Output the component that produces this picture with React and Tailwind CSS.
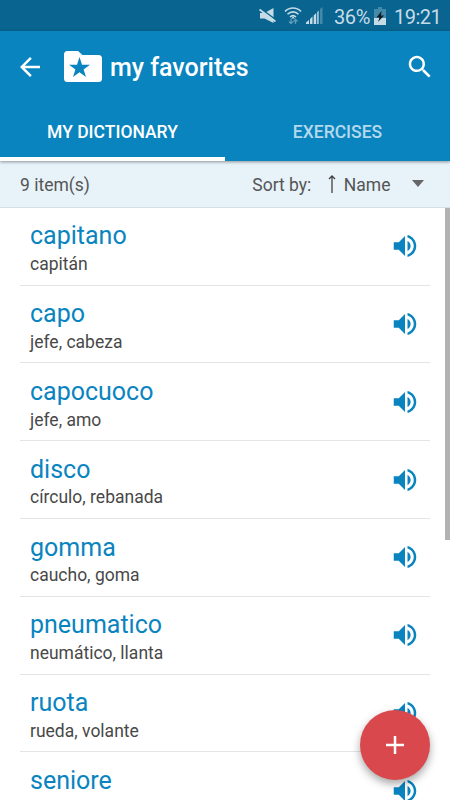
import React from 'react';

const WORDS = [
  { word: 'capitano', translation: 'capitán' },
  { word: 'capo', translation: 'jefe, cabeza' },
  { word: 'capocuoco', translation: 'jefe, amo' },
  { word: 'disco', translation: 'círculo, rebanada' },
  { word: 'gomma', translation: 'caucho, goma' },
  { word: 'pneumatico', translation: 'neumático, llanta' },
  { word: 'ruota', translation: 'rueda, volante' },
  { word: 'seniore', translation: '' },
];

const SpeakerIcon = () => (
  <svg viewBox="0 0 24 24" className="h-[30px] w-[30px] shrink-0 fill-[#0984bf]">
    <path d="M3 9v6h4l5 5V4L7 9H3zm13.5 3c0-1.77-1.02-3.29-2.5-4.03v8.05c1.48-.73 2.5-2.25 2.5-4.02zM14 3.23v2.06c2.89.86 5 3.54 5 6.71s-2.11 5.85-5 6.71v2.06c4.01-.91 7-4.49 7-8.77s-2.99-7.86-7-8.77z" />
  </svg>
);

const StatusBar = () => (
  <div className="flex h-[31px] shrink-0 items-center bg-[#09648f] text-[#c5dce8]">
    {/* muted */}
    <svg viewBox="0 0 17 18" className="ml-[259px] h-[18px] w-[17px] shrink-0">
      <path d="M1 6h4.500L14.500 1v15L5.500 11.500H1z" fill="#c5dce8" />
      <path d="M1 1.200 17 13" stroke="#09648f" strokeWidth="1.500" />
      <path d="M.5 2.500 16.500 14.500" stroke="#c5dce8" strokeWidth="1.800" />
    </svg>
    {/* wifi */}
    <svg viewBox="0 0 18 19" className="ml-[8px] h-[19px] w-[18px] shrink-0" fill="none">
      <path d="M1 5.500c4.500-4.700 11.500-4.700 16 0M3.500 8.300c3.200-3.200 7.800-3.200 11 0M6 11c1.800-1.700 4.200-1.700 6 0" stroke="#c5dce8" strokeWidth="1.600" />
      <path d="M9 10.500 11 12.500H7z" fill="#c5dce8" />
      <path d="M7 13v4.500M5 15.500l2 2 2-2M11.500 18v-4.500M9.500 15.500l2-2 2 2" stroke="#5f9dbb" strokeWidth="1.300" />
    </svg>
    {/* signal */}
    <svg viewBox="0 0 17 17" className="ml-[4px] h-[17px] w-[17px] shrink-0">
      <path d="M0 17v-1.500L3 13v4zM4 17v-5l2.500-2.500V17zM7.700 17V8.500L10.200 6v11z" fill="#c5dce8" />
      <path d="M11.300 17V5l1.700-1.700V17zM14 17V2l2.500-2v17z" fill="#4389aa" />
      <path d="M11.300 17V5l1.200-1.200V17z" fill="#c5dce8" />
    </svg>
    <span className="ml-[11px] w-[38px] pt-[3px] text-[20px] leading-[31px] tracking-[-0.4px]">36%</span>
    <svg viewBox="0 0 12 18" className="ml-[2px] h-[18px] w-[12px] shrink-0">
      <path d="M4 0h4v2h4v16H0V2h4z" fill="#4389aa" />
      <path d="M0 11h12v7H0z" fill="#c5dce8" />
      <path d="M7.500 4 2.500 10.500h3L4 15l6-6.500H7z" fill="#0b1d27" />
    </svg>
    <span className="ml-[8px] pt-[3px] text-[20px] leading-[31px] tracking-[-0.5px]">19:21</span>
  </div>
);

const AppBar = () => (
  <header className="relative z-10 h-[130px] shrink-0 bg-[#0984bf] text-white shadow-[0_1px_3px_rgba(0,0,0,0.4)]">
    <div className="flex h-[71px] items-center pl-[15px] pr-[15px]">
      <svg viewBox="0 0 24 24" className="h-[30px] w-[30px] fill-white">
        <path d="M20 11H7.830l5.590-5.590L12 4l-8 8 8 8 1.410-1.410L7.830 13H20v-2z" />
      </svg>
      <svg viewBox="0 0 38 31" className="ml-[18.500px] h-[31px] w-[38px]">
        <path d="M3.500 0H14l4.500 4H34.500Q38 4 38 7.500v20Q38 31 34.500 31h-31Q0 31 0 27.500v-24Q0 0 3.500 0z" fill="#fff" />
        <path d="m15.500 6 2.500 7.700h8l-6.400 4.700 2.400 7.600-6.500-4.700L9 26l2.400-7.600L5 13.700h8z" fill="#0984bf" />
      </svg>
      <h1 className="ml-[8.500px] pt-[3px] text-[25px] font-medium leading-[30px]">my favorites</h1>
      <svg viewBox="0 0 24 24" className="ml-auto h-[30px] w-[30px] fill-white">
        <path d="M15.500 14h-.79l-.28-.27C15.410 12.590 16 11.110 16 9.500 16 5.910 13.090 3 9.500 3S3 5.910 3 9.500 5.910 16 9.500 16c1.610 0 3.090-.59 4.230-1.570l.27.28v.79l5 4.990L20.490 19l-4.990-5zm-6 0C7.010 14 5 11.990 5 9.500S7.010 5 9.500 5 14 7.010 14 9.500 11.990 14 9.500 14z" />
      </svg>
    </div>
    <nav className="grid h-[59px] grid-cols-2 text-center text-[17.5px] font-medium leading-[61px]">
      <div className="h-[59px] border-b-4 border-white">MY DICTIONARY</div>
      <div className="h-[59px] text-[#b5d9ec]">EXERCISES</div>
    </nav>
  </header>
);

const SortBar = () => (
  <div className="flex h-[47px] shrink-0 items-center border-b border-[#d3dfe5] bg-[#e7f2f9] pl-[20px] pt-[2px] text-[17.5px] text-[#555]">
    <span>9 item(s)</span>
    <span className="ml-auto">Sort by:</span>
    <svg viewBox="0 0 8 18" className="mb-[3px] ml-[17px] h-[18px] w-[8px]" fill="none" stroke="#444">
      <path d="M4 18V1M1 4l3-3 3 3" strokeWidth="1.300" />
    </svg>
    <span className="ml-[7.500px]">Name</span>
    <svg viewBox="0 0 12 7" className="mb-[4px] ml-[21.500px] mr-[26px] h-[7px] w-[12px] fill-[#666]">
      <path d="M0 0h12L6 7z" />
    </svg>
  </div>
);

const WordRow = ({ word, translation }) => (
  <li className="flex h-[77.8px] shrink-0 items-center border-b border-[#e4e4e4] pl-[10px] pr-[10px]">
    <div className="flex-1 pt-[6px]">
      <div className="h-[29.5px] text-[25px] leading-[30px] text-[#0984bf]">{word}</div>
      <div className="h-[26px] text-[17.5px] leading-[26px] text-[#484848]">{translation}</div>
    </div>
    <SpeakerIcon />
  </li>
);

const App = () => (
  <div className="relative flex h-[800px] w-[450px] flex-col overflow-hidden bg-white font-['Roboto',sans-serif]">
    <StatusBar />
    <AppBar />
    <SortBar />
    <main className="flex min-h-0 flex-1 overflow-hidden">
      <ul className="-mt-[0.200px] ml-[20px] w-[410px]">
        {WORDS.map((w) => (
          <WordRow key={w.word} word={w.word} translation={w.translation} />
        ))}
      </ul>
      <div className="ml-auto h-[332px] w-[5px] bg-[#b2b2b2]" />
    </main>

    <button className="absolute bottom-[20px] right-[20px] flex h-[70px] w-[70px] items-center justify-center rounded-full bg-[#d9484c] shadow-[0_4px_9px_rgba(0,0,0,0.35)]">
      <svg viewBox="0 0 18 18" className="h-[18px] w-[18px]" stroke="#fff" strokeWidth="2.500">
        <path d="M9 0v18M0 9h18" />
      </svg>
    </button>
  </div>
);

export default App;
